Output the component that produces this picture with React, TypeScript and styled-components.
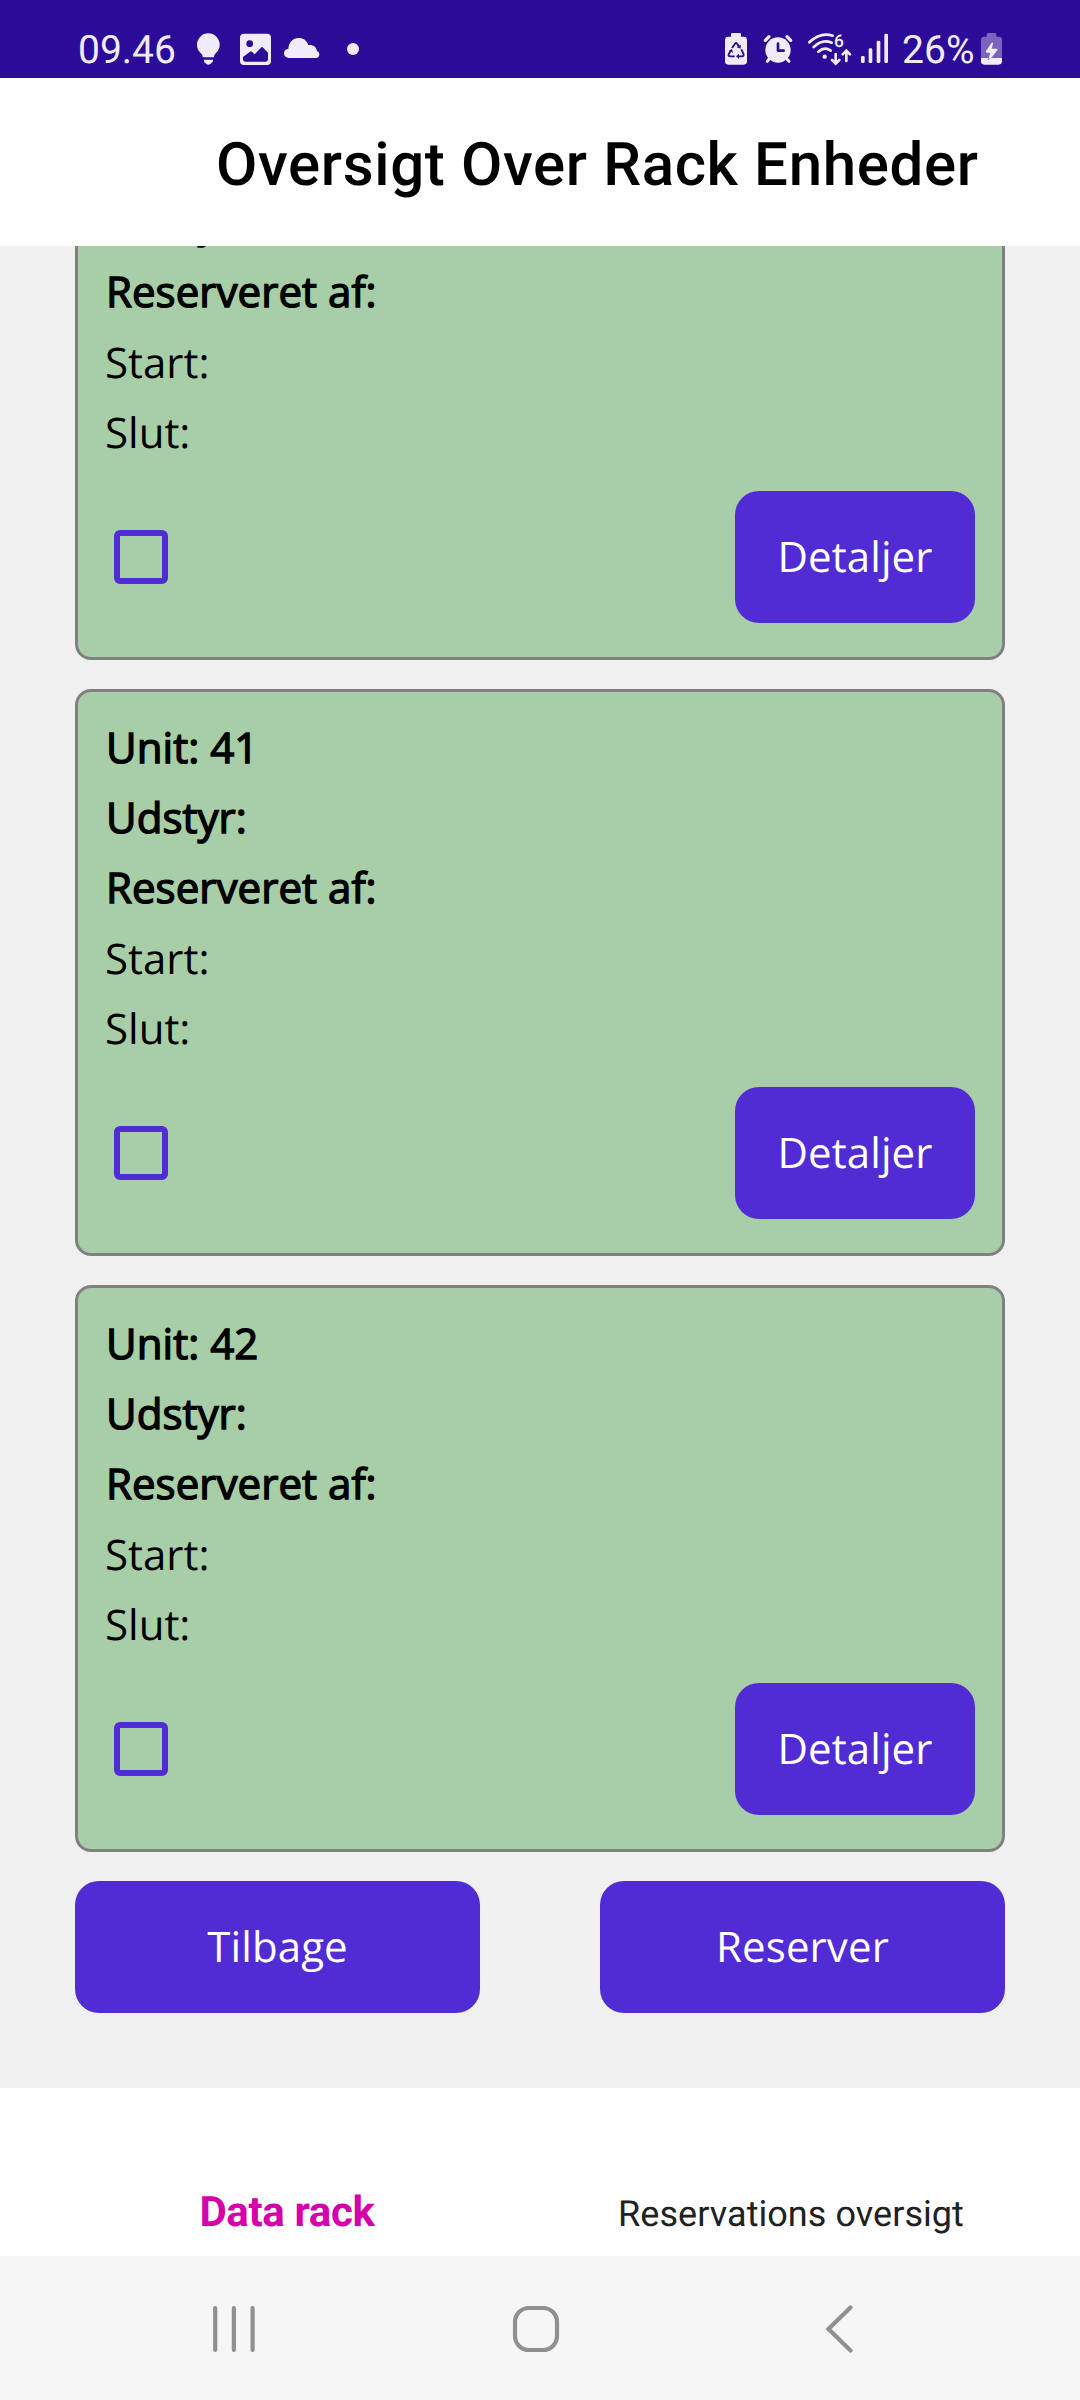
import React from "react";
import styled, { createGlobalStyle } from "styled-components";

const colors = {
  statusBar: "#2b0b98",
  statusInk: "#f0ecfb",
  primary: "#512bd4",
  page: "#f0f0f0",
  card: "#a8cea8",
  cardBorder: "#808080",
  accent: "#d600aa",
  navInk: "#909090",
};

const GlobalStyle = createGlobalStyle`
  *, *::before, *::after { box-sizing: border-box; }
  body { margin: 0; background: #fff; text-rendering: geometricPrecision; }
`;

const Screen = styled.div`
  width: 1080px;
  height: 2400px;
  display: flex;
  flex-direction: column;
  overflow: hidden;
  font-family: Roboto, sans-serif;
`;

const StatusBar = styled.header`
  flex: none;
  height: 78px;
  padding: 20px 78px 0 78px;
  display: flex;
  align-items: center;
  justify-content: space-between;
  background: ${colors.statusBar};
  color: ${colors.statusInk};
`;

const StatusGroup = styled.div`
  display: flex;
  align-items: center;
`;

const StatusText = styled.span<{ $gap?: number }>`
  margin-left: ${(p) => p.$gap ?? 0}px;
  font-size: 39px;
  line-height: 46px;
  padding-top: 1px;
`;

const StatusIcon = styled.svg<{ $gap: number }>`
  display: block;
  flex: none;
  height: 32px;
  margin-left: ${(p) => p.$gap}px;
  fill: currentColor;
  overflow: visible;
`;

const TitleBar = styled.div`
  flex: none;
  height: 168px;
  padding: 5px 0 0 216px;
  display: flex;
  align-items: center;
  background: #fff;
`;

const Title = styled.h1`
  margin: 0;
  font-size: 60px;
  font-weight: 500;
  line-height: 70px;
  letter-spacing: 0.65px;
  white-space: nowrap;
  color: #000;
`;

const Content = styled.main`
  flex: none;
  height: 1842px;
  padding: 0 75px 75px;
  display: flex;
  flex-direction: column;
  gap: 29px;
  background: ${colors.page};
  font-family: "Open Sans", sans-serif;
`;

const UnitList = styled.section`
  flex: 1;
  min-height: 0;
  display: flex;
  flex-direction: column;
  justify-content: flex-end;
  gap: 29px;
  overflow: hidden;
`;

const UnitCard = styled.article`
  flex: none;
  padding: 21px 27px 34px;
  display: flex;
  flex-direction: column;
  border: 3px solid ${colors.cardBorder};
  border-radius: 16px;
  background: ${colors.card};
`;

const Field = styled.div<{ $strong?: boolean }>`
  height: 70px;
  padding-left: ${(p) => (p.$strong ? 1 : 0)}px;
  line-height: ${(p) => (p.$strong ? 69 : 71)}px;
  letter-spacing: ${(p) => (p.$strong ? 0.05 : 0)}px;
  font-size: 42px;
  color: #000;
  -webkit-text-stroke: ${(p) => (p.$strong ? "1.4px #000" : "0")};
`;

const CardFooter = styled.div`
  margin-top: 24px;
  padding-left: 9px;
  display: flex;
  align-items: center;
  justify-content: space-between;
`;

const Checkbox = styled.button`
  width: 54px;
  height: 54px;
  padding: 0;
  border: 6px solid ${colors.primary};
  border-radius: 6px;
  background: transparent;
`;

const Button = styled.button<{ $width: number }>`
  width: ${(p) => p.$width}px;
  height: 132px;
  padding: 0 0 1px;
  border: 0;
  border-radius: 24px;
  background: ${colors.primary};
  color: #fff;
  font: 42px "Open Sans", sans-serif;
  letter-spacing: 0.1px;
  text-rendering: inherit;
`;

const Actions = styled.div`
  flex: none;
  display: flex;
  justify-content: space-between;
`;

const Tabs = styled.nav`
  flex: none;
  height: 168px;
  padding: 100px 37px 0 35px;
  display: grid;
  grid-template-columns: 1fr 1fr;
  align-items: baseline;
  justify-items: center;
  align-content: start;
  background: #fff;
`;

const Tab = styled.span<{ $active?: boolean }>`
  font-size: ${(p) => (p.$active ? 42 : 36)}px;
  font-weight: ${(p) => (p.$active ? 700 : 400)};
  letter-spacing: ${(p) => (p.$active ? "-0.35px" : "0.05px")};
  line-height: 50px;
  color: ${(p) => (p.$active ? colors.accent : "#212121")};
`;

const SystemNav = styled.footer`
  flex: none;
  height: 144px;
  padding: 2px 0 0 212px;
  display: flex;
  align-items: center;
  background: #f6f6f6;
`;

const NavIcon = styled.svg<{ $gap?: number }>`
  display: block;
  flex: none;
  margin-left: ${(p) => p.$gap ?? 0}px;
  fill: none;
  stroke: ${colors.navInk};
  stroke-width: 4.2;
  stroke-linecap: round;
`;

const BulbIcon = () => (
  <StatusIcon $gap={21} width="23" viewBox="411 99 69 96">
    <path d="M445 100a34 34 0 0 1 34 34c0 13-7 21-13 27-3 3-4 6-4 11h-34c0-5-1-8-4-11-6-6-13-14-13-27a34 34 0 0 1 34-34z" />
    <path d="M432 179h27v4q0 4-4 5l-4 4q-6 5-12 0l-4-4q-3-1-3-5z" />
  </StatusIcon>
);

const PictureIcon = () => (
  <StatusIcon $gap={20} width="31" viewBox="540 99 93 96">
    <path
      fillRule="evenodd"
      d="M552 101h69q12 0 12 12v70q0 12-12 12h-69q-12 0-12-12v-70q0-12 12-12zM569 121a10 10 0 1 0 0 20a10 10 0 1 0 0-20zM549 171v6q0 8 8 8h59q8 0 8-8v-19l-16-16q-2-2-4 0l-20 21-8-8q-3-2-6 0z"
    />
  </StatusIcon>
);

const CloudIcon = () => (
  <StatusIcon $gap={13} width="36" viewBox="672 99 108 96">
    <path d="M687 174a14 14 0 0 1-2-28c1-19 14-32 31-32 14 0 25 8 29 21 14-2 24 5 26 18a11 11 0 0 1-1 21z" />
  </StatusIcon>
);

const MoreDot = () => (
  <StatusIcon $gap={27} width="12" viewBox="861 99 36 96">
    <circle cx="879" cy="147" r="18" />
  </StatusIcon>
);

const RecycleBatteryIcon = () => (
  <StatusIcon $gap={0} width="22" viewBox="75 99 66 96">
    <path d="M97 99h22q4 0 4 4v7h8q10 0 10 10v64q0 10-10 10H85q-10 0-10-10v-64q0-10 10-10h8v-7q0-4 4-4z" />
    <g fill="none" stroke={colors.statusBar} strokeWidth="5.5" strokeLinejoin="round">
      <path d="M96 144l9-13q3-4 6 0l7 10" />
      <path d="M124 148l6 13q3 7-4 8h-11" />
      <path d="M104 169H90q-6 0-4-6l7-12" />
    </g>
    <g fill={colors.statusBar}>
      <path d="M110 142l12-8v12z" />
      <path d="M117 161v16l-9-8z" />
      <path d="M87 152l9-5 3 11z" />
    </g>
  </StatusIcon>
);

const AlarmIcon = () => (
  <StatusIcon $gap={16} width="30" viewBox="190 99 90 96">
    <circle cx="235" cy="150" r="38" />
    <g fill="none" stroke="currentColor" strokeLinecap="round">
      <path strokeWidth="10" d="M197 121l11-11M262 110l11 11" />
      <path strokeWidth="9" d="M209 176l-6 8M261 176l7 8" />
    </g>
    <path
      d="M235 131v21h17"
      fill="none"
      stroke={colors.statusBar}
      strokeWidth="8"
      strokeLinecap="round"
      strokeLinejoin="round"
    />
  </StatusIcon>
);

const SixLabel = styled.text`
  font: 500 52px Roboto, sans-serif;
`;

const WifiIcon = () => (
  <StatusIcon $gap={15} width="44" viewBox="325 99 132 96">
    <g fill="none" stroke="currentColor" strokeWidth="8" strokeLinecap="round">
      <path d="M329 127q33-31 70-20" />
      <path d="M342 141q26-25 54-13" />
      <path d="M356 155q19-17 37-3" />
      <path d="M408 162v27M397 180l11 11 11-11" />
      <path d="M440 183v-29M429 163l11-11 11 11" />
    </g>
    <circle cx="375" cy="170" r="6.5" />
    <SixLabel x="403" y="141">6</SixLabel>
  </StatusIcon>
);

const SignalIcon = () => (
  <StatusIcon $gap={9} width="27" viewBox="483 99 81 96">
    <rect x="483" y="168" width="11" height="21" rx="4" />
    <rect x="506" y="145" width="11" height="44" rx="4" />
    <rect x="530" y="122" width="11" height="67" rx="4" />
    <rect x="553" y="101" width="11" height="88" rx="4" />
  </StatusIcon>
);

const ChargingIcon = () => (
  <StatusIcon $gap={6.5} width="21" viewBox="843 99 63 96">
    <path
      opacity=".4"
      d="M864 99h21q4 0 4 4v7h7q10 0 10 10v54h-63v-54q0-10 10-10h7v-7q0-4 4-4z"
    />
    <path d="M843 174h63v10q0 10-10 10h-43q-10 0-10-10z" />
    <path d="M875 128q5-1 4 3l-4 15h15q4 1 2 5l-21 26q-5 3-5-2l5-17h-11q-4-1-2-5z" />
    <path d="M863 178l7-4-3 4q-3 2-4 0z" fill={colors.statusBar} />
  </StatusIcon>
);

type FieldData = { text: string; strong?: boolean };

const details: FieldData[] = [
  { text: "Udstyr:", strong: true },
  { text: "Reserveret af:", strong: true },
  { text: "Start:" },
  { text: "Slut:" },
];

const units: { id: number; fields: FieldData[] }[] = [
  { id: 40, fields: details },
  { id: 41, fields: [{ text: "Unit: 41", strong: true }, ...details] },
  { id: 42, fields: [{ text: "Unit: 42", strong: true }, ...details] },
];

const Unit = ({ fields }: { fields: FieldData[] }) => (
  <UnitCard>
    {fields.map((f) => (
      <Field key={f.text} $strong={f.strong}>
        {f.text}
      </Field>
    ))}
    <CardFooter>
      <Checkbox role="checkbox" aria-checked={false} />
      <Button $width={240}>Detaljer</Button>
    </CardFooter>
  </UnitCard>
);

export default function App() {
  return (
    <>
      <GlobalStyle />
      <Screen>
        <StatusBar>
          <StatusGroup>
            <StatusText>09.46</StatusText>
            <BulbIcon />
            <PictureIcon />
            <CloudIcon />
            <MoreDot />
          </StatusGroup>
          <StatusGroup>
            <RecycleBatteryIcon />
            <AlarmIcon />
            <WifiIcon />
            <SignalIcon />
            <StatusText $gap={14}>26%</StatusText>
            <ChargingIcon />
          </StatusGroup>
        </StatusBar>
        <TitleBar>
          <Title>Oversigt Over Rack Enheder</Title>
        </TitleBar>
        <Content>
          <UnitList>
            {units.map((unit) => (
              <Unit key={unit.id} fields={unit.fields} />
            ))}
          </UnitList>
          <Actions>
            <Button $width={405}>Tilbage</Button>
            <Button $width={405}>Reserver</Button>
          </Actions>
        </Content>
        <Tabs>
          <Tab $active>Data rack</Tab>
          <Tab>Reservations oversigt</Tab>
        </Tabs>
        <SystemNav>
          <NavIcon width="44" height="48" viewBox="0 0 44 48">
            <path d="M3.2 3v42M21.9 3v42M40.6 3v42" />
          </NavIcon>
          <NavIcon $gap={256} width="48" height="48" viewBox="0 0 48 48">
            <rect x="3" y="3" width="42" height="42" rx="14" />
          </NavIcon>
          <NavIcon $gap={265} width="28" height="48" viewBox="0 0 28 48">
            <path d="M25.5 2.5L3.5 24l22 21.5" />
          </NavIcon>
        </SystemNav>
      </Screen>
    </>
  );
}
